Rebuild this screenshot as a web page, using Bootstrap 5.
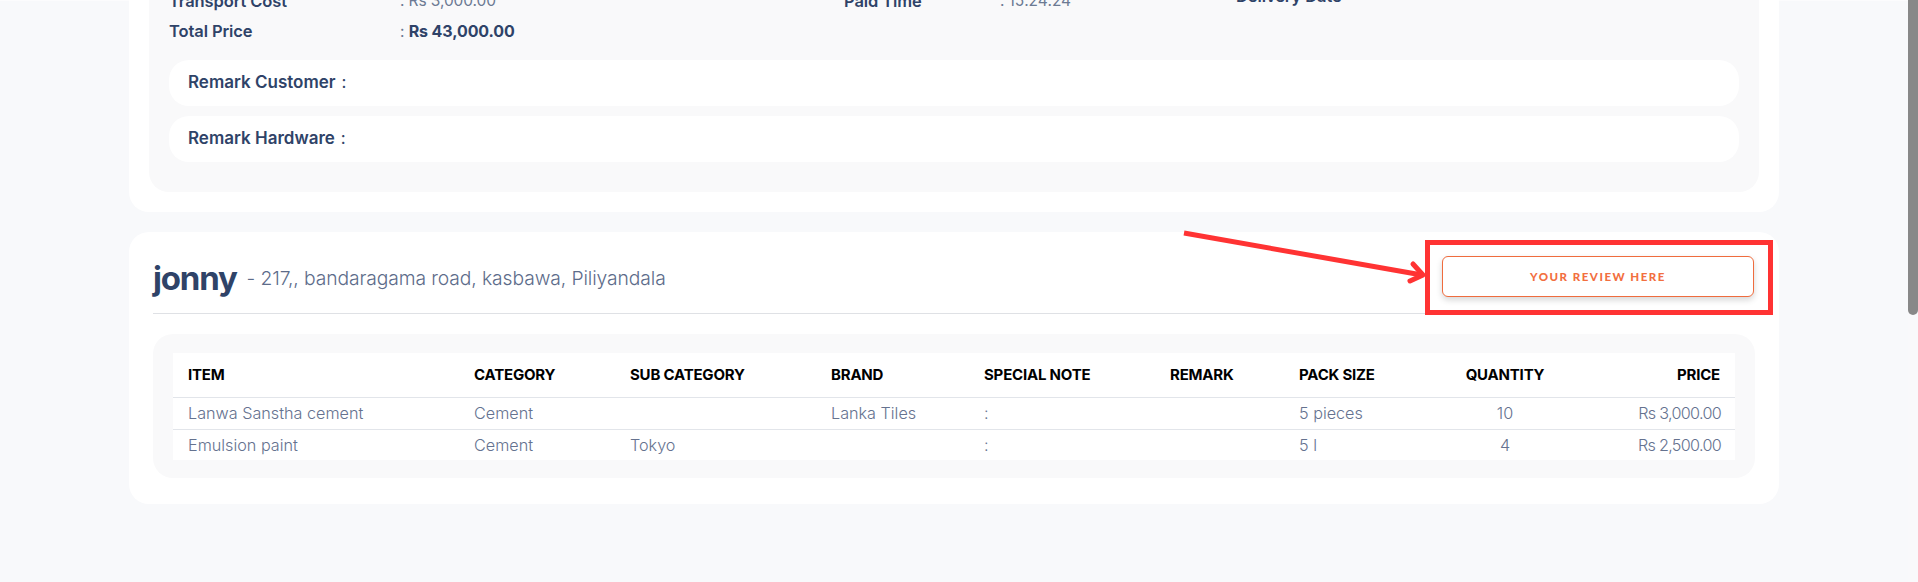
<!DOCTYPE html>
<html lang="en">
<head>
<meta charset="utf-8">
<title>Order review</title>
<link href="https://cdn.jsdelivr.net/npm/bootstrap@5.3.0/dist/css/bootstrap.min.css" rel="stylesheet">
<style>
html,body{height:582px;overflow:hidden}
body{background:linear-gradient(#fcfcfd 1px,transparent 1px),#f8f9fb;font-family:Inter,"Noto Sans",sans-serif;color:#6c7a93;position:relative}
.stage{padding:0 139px 0 129px;margin-top:-23px}
.sheet{background:#fff;border-radius:20px;padding:0 20px 20px;margin-bottom:20px}
.sheet-top{height:235px}
.panel{background:#f9f9fa;border-radius:20px}
.panel-top{height:215px;padding:9px 20px 0;border-top-left-radius:0;border-top-right-radius:0}
.sum-row{height:30px;font-size:16.5px;font-weight:600;color:#2f4368;letter-spacing:-.1px}
.sum-label{width:231px}
.sum-val{font-weight:400;font-size:15.5px;color:#6c7a93}
.sum-total{color:#2f4368;font-weight:700;font-size:16px}
.sum-mid{margin-left:auto;display:flex;width:895px}
.sum-name{width:156px}
.sum-time{width:236px}
.sum-up{margin-bottom:10px}
.pill{background:#fff;border-radius:20px;height:46px;padding:0 20px 0 19px;font-size:17px;font-weight:600;color:#2f4368;margin-bottom:10px;display:flex;align-items:center;gap:6px}
.pill-first{margin-top:14px}
.sheet-bottom{height:272px;padding:0 24px 0 24px}
.head-row{height:82px;border-bottom:1px solid #dfe1e5;padding-top:8px}
.who{font-size:33px;font-weight:700;color:#2f4368;letter-spacing:-1.2px;line-height:1;padding-top:4px}
.addr{font-size:19.3px;font-weight:300;color:#5d6c8a;margin-left:10px;letter-spacing:-.1px;padding-top:4px}
.rev-btn{width:312px;height:41px;border:1px solid #ef6c3e;border-radius:6px;background:#fff;color:#f26f3f;font:900 11.5px Lato,sans-serif;letter-spacing:1.5px;box-shadow:0 3px 6px rgba(0,0,0,.16);margin-right:1px}
.panel-tab{margin-top:20px;height:144px;padding:19px 20px 18px 20px}
.grid-tab{width:100%;background:#fff;margin:0;table-layout:fixed;--bs-table-bg:transparent}
.grid-tab th{font-size:15px;font-weight:700;color:#000;height:44px;padding:0 15px;vertical-align:middle;border-bottom:1px solid #e2e5ea;white-space:nowrap;letter-spacing:-.2px}
.grid-tab td{font-size:16.2px;font-weight:300;color:#65728f;height:32px;padding:0 15px;vertical-align:middle;border-bottom:1px solid #e2e5ea;white-space:nowrap;background:transparent}
.grid-tab tr:last-child td{border-bottom:0;height:31px}
.grid-tab td.cost{letter-spacing:-.7px;padding-right:14px}
.sbar{position:absolute;top:0;right:0;width:10px;height:315px;background:#888;border-radius:0 0 5px 5px}
.strack{position:absolute;top:0;right:0;width:10px;height:582px;background:#f9f9fb}
.redbox{position:absolute;left:1425px;top:240px;width:348px;height:75px;border:5px solid #ff3333;pointer-events:none}
.arrow{position:absolute;left:1180px;top:225px;pointer-events:none}
</style>
</head>
<body>
<div class="stage">
  <section class="sheet">
    <div class="sheet-top panel panel-top">
      <div class="sum-row d-flex align-items-center">
        <span class="sum-label">Transport Cost</span><span class="sum-val">: Rs 3,000.00</span>
        <div class="sum-mid align-items-center"><span class="sum-name">Paid Time</span><span class="sum-val sum-time">: 15:24:24</span><span class="sum-up">Delivery Date</span></div>
      </div>
      <div class="sum-row d-flex align-items-center">
        <span class="sum-label">Total Price</span><span class="sum-val">: <span class="sum-total">Rs 43,000.00</span></span>
      </div>
      <div class="pill pill-first">Remark Customer <span class="fw-normal">:</span></div>
      <div class="pill">Remark Hardware <span class="fw-normal">:</span></div>
    </div>
  </section>
  <section class="sheet sheet-bottom">
    <div class="head-row d-flex align-items-center justify-content-between">
      <div class="d-flex align-items-center"><span class="who">jonny</span><span class="addr">- 217,, bandaragama road, kasbawa, Piliyandala</span></div>
      <button class="rev-btn" type="button">YOUR REVIEW HERE</button>
    </div>
    <div class="panel panel-tab">
      <table class="table grid-tab">
        <colgroup><col style="width:286px"><col style="width:156px"><col style="width:201px"><col style="width:153px"><col style="width:186px"><col style="width:129px"><col style="width:150px"><col style="width:142px"><col></colgroup>
        <thead><tr><th>ITEM</th><th>CATEGORY</th><th>SUB CATEGORY</th><th>BRAND</th><th>SPECIAL NOTE</th><th>REMARK</th><th>PACK SIZE</th><th class="text-center">QUANTITY</th><th class="text-end">PRICE</th></tr></thead>
        <tbody>
          <tr><td>Lanwa Sanstha cement</td><td>Cement</td><td></td><td>Lanka Tiles</td><td>:</td><td></td><td>5 pieces</td><td class="text-center">10</td><td class="text-end cost">Rs 3,000.00</td></tr>
          <tr><td>Emulsion paint</td><td>Cement</td><td>Tokyo</td><td></td><td>:</td><td></td><td>5 l</td><td class="text-center">4</td><td class="text-end cost">Rs 2,500.00</td></tr>
        </tbody>
      </table>
    </div>
  </section>
</div>
<div class="strack"></div>
<div class="sbar"></div>
<div class="redbox"></div>
<svg class="arrow" width="250" height="60" viewBox="0 0 250 60" fill="none" stroke="#ff3333" stroke-width="5" stroke-linecap="round" stroke-linejoin="round"><path d="M4 8 L242 50" stroke-linecap="butt"/><path d="M233 39 L243 50 L230 56"/></svg>
<script src="https://cdn.jsdelivr.net/npm/bootstrap@5.3.0/dist/js/bootstrap.bundle.min.js"></script>
</body>
</html>
